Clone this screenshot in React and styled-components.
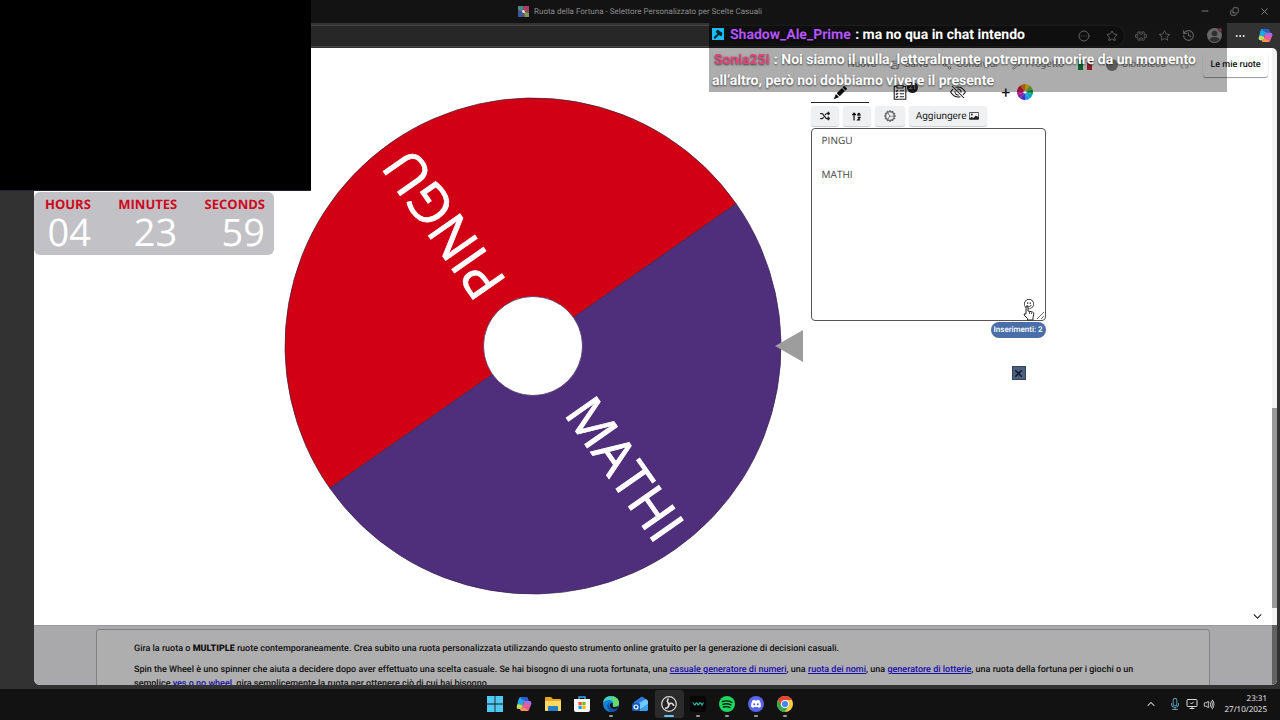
import React from "react";
import styled, { createGlobalStyle } from "styled-components";
import {
  BsPencilFill, BsEyeSlash, BsCardImage, BsEmojiSmile,
  BsPuzzle, BsStar, BsChevronDown, BsChevronUp, BsMic, BsVolumeUp, BsGearWideConnected,
} from "react-icons/bs";
import { FaShuffle } from "react-icons/fa6";
import { Star, History, CircleEllipsis, Ellipsis, Minus, X, Copy, MonitorCheck, Share2, Wrench, Save, Maximize } from "lucide-react";

const Global = createGlobalStyle`
  * { box-sizing: border-box; }
  body { margin: 0; background: #323232; font-family: Roboto, sans-serif; color: #111; text-rendering: geometricPrecision; }
  button { font: inherit; color: inherit; border: 0; padding: 0; background: none; }
  button, textarea { text-rendering: inherit; }
  svg { display: block; flex: none; }
`;

const Desktop = styled.div`
  position: relative;
  height: 100vh;
  display: flex;
  flex-direction: column;
  overflow: hidden;
`;
const TitleBar = styled.header`
  height: 23px;
  flex: none;
  padding-bottom: 1px;
  background: #131313;
  color: #8c8c8c;
  display: grid;
  grid-template-columns: 1fr auto 1fr;
  align-items: center;
`;
const WindowTitle = styled.h1`
  grid-column: 2;
  margin: 0;
  display: flex;
  align-items: center;
  gap: 5px;
  font-size: 8px;
  font-weight: 400;
`;
const WindowButtons = styled.div`
  display: flex;
  justify-content: flex-end;
  gap: 20px;
  padding-right: 10px;
`;
const AddressRow = styled.div`
  height: 25px;
  flex: none;
  display: flex;
  align-items: center;
  background: #323232;
  color: #f2f2f2;
  padding-right: 7px;
`;
const AddressPill = styled.div`
  flex: 1;
  height: 22px;
  background: #272727;
  border: 1px solid #454545;
  border-left: 0;
  border-radius: 0 11px 11px 0;
  display: flex;
  align-items: center;
  justify-content: flex-end;
  gap: 16px;
  padding-right: 6px;
`;
const BrowserTools = styled.div`
  display: flex;
  align-items: center;
  gap: 12px;
  padding-left: 10px;
`;
const Avatar = styled.span`
  width: 15px;
  height: 15px;
  border-radius: 50%;
  background: #fff;
`;
const Viewport = styled.div`
  flex: 1;
  min-height: 0;
  display: flex;
  padding: 0 3px 4px 34px;
  background: #323232;
`;
const Page = styled.div`
  flex: 1;
  min-width: 0;
  display: flex;
  flex-direction: column;
  background: #fff;
  border-radius: 0 0 0 6px;
  overflow: hidden;
`;
const ScrollTrack = styled.div`
  width: 5px;
  background: #f3f3f3;
  border-radius: 0 6px 6px 0;
  display: flex;
  flex-direction: column;
  justify-content: flex-end;
  overflow: hidden;
`;
const ScrollThumb = styled.div`
  height: 200px;
  margin-bottom: 17px;
  background: #999;
`;
const ScrollRest = styled.div`
  height: 60px;
  background: #626262;
`;
const SiteNav = styled.nav`
  height: 32px;
  flex: none;
  display: flex;
  align-items: center;
  justify-content: flex-end;
  gap: 14px;
  padding: 1px 4px 0 0;
  font-size: 10px;
`;
const NavItem = styled.button`
  display: flex;
  align-items: center;
  gap: 4px;
  opacity: 0.5;
`;
const MyWheels = styled.button`
  height: 24px;
  width: 65px;
  font-size: 9px;
  font-weight: 500;
  border-radius: 3px;
  background: #fff;
  box-shadow: 0 1px 1px #0006;
`;
const Stage = styled.main`
  flex: 1;
  min-height: 0;
  display: flex;
  justify-content: flex-start;
  padding-left: 20%;
`;
const WheelArt = styled.svg`
  width: 521px;
  height: 500px;
  margin-top: 16px;
`;
const Panel = styled.section`
  width: 235px;
  margin-left: 8px;
  display: flex;
  flex-direction: column;
`;
const Tabs = styled.div`
  display: grid;
  grid-template-columns: repeat(4, 1fr);
  height: 23px;
`;
const Tab = styled.button`
  position: relative;
  display: flex;
  align-items: center;
  justify-content: center;
  gap: 7px;
  padding: 2px 0 0 2px;
  font-size: 16px;
  border-bottom: 1px solid ${(p) => (p.$active ? "#222" : "transparent")};
`;
const Count = styled.span`
  position: absolute;
  right: 10px;
  top: 2px;
  width: 11px;
  height: 11px;
  border-radius: 50%;
  background: #222;
  color: #bbb;
  font-size: 7px;
  line-height: 11px;
`;
const Tools = styled.div`
  display: flex;
  gap: 4px;
  padding: 3px 0 2px;
`;
const Tool = styled.button`
  height: 20px;
  min-width: ${(p) => (p.$wide ? "78px" : p.$mid ? "30px" : "28px")};
  display: flex;
  align-items: center;
  justify-content: center;
  gap: 3px;
  font-size: 10px;
  color: #222;
  background: #eef0f2;
  border-radius: 3px;
  box-shadow: 0 1px 1px #0003;
`;
const EntryBox = styled.div`
  position: relative;
  display: flex;
`;
const Entries = styled.textarea`
  width: 100%;
  height: 193px;
  padding: 3px 10px;
  border: 1px solid #555;
  border-radius: 4px;
  font: 10px/17px "Open Sans", sans-serif;
  color: #444;
  resize: vertical;
  outline: 0;
`;
const Emoji = styled.button`
  position: absolute;
  right: 12px;
  bottom: 12px;
`;
const Pointer = styled.svg`
  position: absolute;
  right: 11px;
  bottom: 0;
`;
const EntryCount = styled.output`
  align-self: flex-end;
  margin-top: 1px;
  height: 16px;
  padding: 0 3px;
  border-radius: 8px;
  background: #4a6fa8;
  color: #fff;
  font-size: 8px;
  font-weight: 500;
  line-height: 16px;
`;
const CloseAd = styled.button`
  align-self: flex-end;
  margin: 28px 20px 0 0;
  width: 14px;
  height: 14px;
  display: grid;
  place-items: center;
  background: #4c607d;
  border: 1px solid #33435c;
`;
const ScrollHint = styled.button`
  align-self: flex-end;
  margin: 0 10px 4px 0;
`;
const About = styled.footer`
  flex: none;
  height: 60px;
  padding: 3px 62px 0;
  background: #a9a9ab;
  border-top: 1px solid #999;
  overflow: hidden;
`;
const AboutCard = styled.article`
  height: 80px;
  padding: 12px 47px 12px 37px;
  background: #aeaeae;
  border: 1px solid #808080;
  border-radius: 3px;
  font-size: 9px;
  font-weight: 500;
  line-height: 14px;
  p { margin: 0 0 7px; }
  b { font-weight: 900; }
  a { color: #1a0dab; }
`;
const Taskbar = styled.div`
  height: 31px;
  flex: none;
  display: grid;
  grid-template-columns: 1fr auto 1fr;
  align-items: center;
  padding-bottom: 1px;
  background: #131212;
`;
const Apps = styled.div`
  grid-column: 2;
  display: flex;
`;
const AppButton = styled.button`
  width: 29px;
  height: 28px;
  display: grid;
  place-items: center;
  position: relative;
  border-radius: 3px;
  background: ${(p) => (p.$active ? "#2b2b2b" : "none")};
  &::after {
    content: "";
    position: absolute;
    bottom: 1px;
    width: ${(p) => (p.$active ? "10px" : "4px")};
    height: 2px;
    border-radius: 1px;
    background: ${(p) => (p.$active ? "#62c3ee" : p.$running ? "#999" : "none")};
  }
`;
const Tray = styled.div`
  display: flex;
  align-items: center;
  justify-content: flex-end;
  gap: 5px;
  padding-right: 13px;
  color: #ddd;
`;
const TrayMore = styled.button`
  margin-right: 9px;
`;
const Clock = styled.time`
  font: 8px/11px "Open Sans", sans-serif;
  text-align: right;
  color: #f2f2f2;
  margin-left: 4px;
`;
const CameraOverlay = styled.div`
  position: absolute;
  left: 0;
  top: 0;
  width: 311px;
  height: 191px;
  background: #000;
  border-bottom: 1px solid #252238;
`;
const Countdown = styled.div`
  position: absolute;
  left: 34px;
  top: 192px;
  width: 240px;
  height: 63px;
  padding: 4px 9px 0 11px;
  display: flex;
  justify-content: space-between;
  background: #c2c1c5;
  border-radius: 6px;
  font-family: "Open Sans", sans-serif;
  text-align: right;
`;
const Unit = styled.div`
  font-size: 13px;
  line-height: 16px;
  font-weight: 700;
  color: #cc0a1c;
`;
const Digits = styled.div`
  font-size: 38px;
  line-height: 40px;
  font-weight: 400;
  color: #fff;
`;
const Chat = styled.div`
  position: absolute;
  left: 709px;
  top: 23px;
  width: 518px;
  font-size: 14px;
  font-weight: 700;
  line-height: 21px;
  color: #fff;
  text-shadow: 0 1px 2px #000a;
`;
const ChatLine = styled.p`
  margin: 0;
  padding: ${(p) => (p.$first ? "2px 3px" : "2px 3px 0")};
  background: ${(p) => (p.$first ? "#0009" : "#00000052")};
`;
const User = styled.span`
  color: ${(p) => p.$color};
  margin: 0 1px 0 2px;
`;
const ModBadge = styled.svg`
  && { display: inline-block; vertical-align: -1px; margin-right: 4px; }
`;

const rainbow = ["#ffd400", "#8cc63f", "#00a651", "#00a9c0", "#2790f0", "#4632c1", "#8a22a1", "#c2188b", "#e8192c", "#f58220"];

function MiniWheel({ size }) {
  return (
    <svg width={size} height={size} viewBox="-10 -10 20 20">
      {rainbow.map((c, i) => {
        const a = (i * Math.PI) / 5;
        const b = ((i + 1) * Math.PI) / 5;
        return (
          <path key={c} fill={c}
            d={`M0 0L${10 * Math.sin(a)} ${-10 * Math.cos(a)}A10 10 0 0 1 ${10 * Math.sin(b)} ${-10 * Math.cos(b)}Z`} />
        );
      })}
      <circle r="2" fill="#fff" />
    </svg>
  );
}

function Wheel() {
  return (
    <WheelArt viewBox="-251 -250 521 500" role="img" aria-label="Ruota: PINGU, MATHI">
      <g transform="rotate(-35)">
        <path d="M-248 0A248 248 0 0 1 248 0Z" fill="#d20015" stroke="#4b2038" strokeWidth="0.7" />
        <path d="M-248 0A248 248 0 0 0 248 0Z" fill="#4f2f7c" stroke="#3b2857" strokeWidth="0.7" />
      </g>
      <g fill="#fff" stroke="#fff" strokeWidth="0.8" fontFamily="'Open Sans', sans-serif" textAnchor="end">
        <text transform="rotate(55)" x="234" y="14" fontSize="52">MATHI</text>
        <text transform="rotate(-125)" x="234" y="16" fontSize="54">PINGU</text>
      </g>
      <circle r="49.500" fill="#fff" stroke="#3b2857" strokeWidth="0.7" />
      <path d="M242 0L270 -16V16Z" fill="#9d9d9d" />
    </WheelArt>
  );
}

function Checklist() {
  return (
    <svg width="14" height="16" viewBox="0 0 14 16" fill="none" stroke="#222" strokeWidth="1.1">
      <path d="M4 2.5H1.2V15.2H12.8V2.5H10M4 1.2H10V4H4ZM6.8 6.8H11M6.8 9.8H11M6.8 12.8H11M2.8 6.6L3.7 7.5L5.2 5.8M2.8 9.6L3.7 10.5L5.2 8.8M2.8 12.6L3.7 13.5L5.2 11.8" />
    </svg>
  );
}

function SortIcon() {
  return (
    <svg width="9" height="9" viewBox="0 0 11 10" fill="none" stroke="#111" strokeWidth="1.5">
      <path d="M2.500 10V1M.3 3.2L2.500 1L4.700 3.2M7.2 4.2V2.2Q8.4 .2 9.6 2.2V4.2M7.2 3.2H9.6M7 6H9.8L7 9.2H10" />
    </svg>
  );
}

function CopilotIcon({ size }) {
  return (
    <svg width={size} height={size} viewBox="0 0 16 16">
      <path d="M5 1H10Q11.500 1 12 3L12.500 5H9.500Q8 5 7.500 7L6.500 11Q6 13 4 13H3Q0 13 1 9.500L2.500 3.500Q3 1 5 1Z" fill="#20a8e8" />
      <path d="M2 8L6.800 9.500L6.500 11Q6 13 4 13H3Q0 13 1 9.500Z" fill="#c9dc4a" />
      <path d="M11 15H6Q4.500 15 4 13Q6 13 6.500 11L7.500 7Q8 5 9.500 5H13Q16 5 15 8.500L13.500 12.500Q13 15 11 15Z" fill="#ec5c92" />
      <path d="M9.500 5H13Q16 5 15 8.500L14.600 10L8 6Q8.500 5 9.500 5Z" fill="#ab69e5" />
      <path d="M4 13Q6 13 6.500 11L12.500 14.500Q12 15 11 15H6Q4.500 15 4 13Z" fill="#fa9551" />
      <path d="M5 1H10Q11.500 1 12 3L12.500 5H9.500L5 3Z" fill="#285bd5" />
    </svg>
  );
}

const appIcons = [
  { name: "Start", art: <g fill="#52c8f5"><path d="M0 0H7.600V7.600H0ZM8.400 0H16V7.600H8.400ZM0 8.400H7.600V16H0ZM8.400 8.400H16V16H8.400Z" /></g> },
  { name: "Copilot", copilot: true },
  { name: "Esplora file", art: <g><path d="M0 2Q0 1 1 1H6L8 3H15Q16 3 16 4V14Q16 15 15 15H1Q0 15 0 14Z" fill="#e9a820" /><path d="M0 5H16V14Q16 15 15 15H1Q0 15 0 14Z" fill="#ffda62" /><path d="M3 15V11Q3 10 4 10H12Q13 10 13 11V15Z" fill="#2680c8" /></g> },
  { name: "Store", art: <g><path d="M5 4V1H11V4" stroke="#38a6e8" fill="none" strokeWidth="1.500" /><path d="M0 3H16V14Q16 16 14 16H2Q0 16 0 14Z" fill="#f4f6f8" /><path d="M4.500 6H7.700V9.200H4.500Z" fill="#f25022" /><path d="M8.300 6H11.500V9.200H8.300Z" fill="#7fba00" /><path d="M4.500 9.800H7.700V13H4.500Z" fill="#00a4ef" /><path d="M8.300 9.800H11.500V13H8.300Z" fill="#ffb900" /></g> },
  { name: "Edge", running: true, art: <g><circle cx="8" cy="8" r="8" fill="#1482d4" /><path d="M0 7Q1 0 8 0Q15 .5 16 7Q16 11 11.500 11Q9 11 10 9Q11 5 7 4Q2 3.500 0 7Z" fill="#45cfc0" /><path d="M10 0.300Q16 2 16 7Q16 11 11.500 11Q9.500 10.500 10 9Q12 5 8 3Z" fill="#66d96b" /><path d="M6 6Q1.500 11 8 16Q13 16 15 12Q10 14.500 7 11Q5 8.500 6 6Z" fill="#0c4fa3" /><path d="M7 8Q6 12 11 13Q13 13 15 12Q16 10 14 10.500Q8 12 10 8Q9 6 7 8Z" fill="#131212" /></g> },
  { name: "Outlook", art: <g><path d="M2 6L9 1Q10 .5 11 1L16 5V13Q16 15 14 15H4Q2 15 2 13Z" fill="#2a77dd" /><path d="M2 10L14 3L16 5V8L6 15H4Q2 15 2 13Z" fill="#70c8fa" /><path d="M7 15L16 8V13Q16 15 14 15Z" fill="#3aa3ef" /><rect y="7" width="8" height="8" rx="1.500" fill="#1459b5" /><circle cx="4" cy="11" r="2" fill="none" stroke="#fff" strokeWidth="1.200" /></g> },
  { name: "OBS", active: true, art: <g><circle cx="8" cy="8" r="7.300" fill="#252327" stroke="#ddd" strokeWidth="1.200" /><path d="M7.500 2.500Q5 5.500 8 7.800M12.800 10Q11.800 6 8.200 7.800M4 12.300Q8 12 8 8" fill="none" stroke="#ddd" strokeWidth="1.600" /><circle cx="8" cy="8" r="1.300" fill="#ddd" /></g> },
  { name: "Wave Link", running: true, art: <g><rect width="16" height="16" rx="3" fill="#050606" /><path d="M2.500 6.500Q3.500 6.500 4.500 9Q5.500 9 6 7Q7 6.500 8 9Q9 9 9.500 7Q11 6.500 12 9L13.500 6.500" fill="none" stroke="#31bfa8" strokeWidth="1.100" /></g> },
  { name: "Spotify", running: true, art: <g><circle cx="8" cy="8" r="8" fill="#1ed760" /><path d="M3.500 5.500Q8.500 4 12.800 6.300M4 8.300Q8.300 7 12 9M4.500 11Q8.200 10 11 11.600" fill="none" stroke="#10180f" strokeWidth="1.400" strokeLinecap="round" /></g> },
  { name: "Discord", running: true, art: <g><circle cx="8" cy="8" r="8" fill="#5865f2" /><path d="M4.500 4.500Q6 3.700 6.600 3.800L7 4.500H9L9.400 3.800Q10 3.700 11.500 4.500Q13.200 7 13 10.500Q11.500 11.800 10.500 11.800L9.900 10.900H6.100L5.500 11.800Q4.500 11.800 3 10.500Q2.800 7 4.500 4.500Z" fill="#fff" /><circle cx="6.200" cy="8.300" r="1.100" fill="#5865f2" /><circle cx="9.800" cy="8.300" r="1.100" fill="#5865f2" /></g> },
  { name: "Chrome", running: true, art: <g><circle cx="8" cy="8" r="8" fill="#ffcd40" /><path d="M1.070 4A8 8 0 0 1 14.930 4H8L4.540 10Z" fill="#ea4335" /><path d="M1.070 4A8 8 0 0 0 8 16L11.460 10L4.540 10Z" fill="#34a853" /><circle cx="8" cy="8" r="4" fill="#fff" /><circle cx="8" cy="8" r="3.100" fill="#4285f4" /></g> },
];

const units = [["HOURS", "04"], ["MINUTES", "23"], ["SECONDS", "59"]];

export default function App() {
  return (
    <>
      <Global />
      <Desktop>
        <TitleBar>
          <WindowTitle>
            <svg width="11" height="11" viewBox="0 0 11 11">
              <path d="M0 0H11V11H0Z" fill="#7a3f78" /><path d="M0 0H5L5.500 5.500L0 4Z" fill="#3f8f85" />
              <path d="M6 0H11V5L5.500 5.500Z" fill="#b23b64" /><path d="M0 6L5.500 5.500L4 11H0Z" fill="#315ba0" />
              <path d="M11 7V11H7L5.500 5.500Z" fill="#7c9b46" /><circle cx="5.500" cy="5.500" r="1.500" fill="#ddd" />
            </svg>
            Ruota della Fortuna - Selettore Personalizzato per Scelte Casuali
          </WindowTitle>
          <WindowButtons>
            <button aria-label="Riduci"><Minus size={10} strokeWidth={2} /></button>
            <button aria-label="Ripristina"><Copy size={9} strokeWidth={2} transform="rotate(-90)" /></button>
            <button aria-label="Chiudi"><X size={11} strokeWidth={2} /></button>
          </WindowButtons>
        </TitleBar>
        <AddressRow>
          <AddressPill>
            <CircleEllipsis size={12} strokeWidth={2} />
            <Star size={12} strokeWidth={2} />
          </AddressPill>
          <BrowserTools>
            <BsPuzzle size={12} />
            <BsStar size={11} />
            <History size={13} strokeWidth={2} />
            <Avatar>
              <svg width="15" height="15" viewBox="0 0 15 15"><circle cx="7.500" cy="5.500" r="2.800" fill="#777" /><path d="M2.500 12Q3 9 7.500 9Q12 9 12.500 12Q7.500 16 2.500 12Z" fill="#777" /><circle cx="13" cy="2" r="2" fill="#ff8fa1" /></svg>
            </Avatar>
            <Ellipsis size={12} color="#fff" />
            <CopilotIcon size={15} />
          </BrowserTools>
        </AddressRow>
        <Viewport>
          <Page>
            <SiteNav>
              <NavItem>Nuovo</NavItem>
              <NavItem><Save size={10} />Salva</NavItem>
              <NavItem><Share2 size={10} />Condividi</NavItem>
              <NavItem><Wrench size={10} />Progetto</NavItem>
              <svg width="14" height="10" viewBox="0 0 14 10"><path d="M0 0H5V10H0Z" fill="#009246" /><path d="M5 0H9V10H5Z" fill="#fff" /><path d="M9 0H14V10H9Z" fill="#ce2b37" /></svg>
              <NavItem><svg width="12" height="12" viewBox="0 0 12 12"><circle cx="6" cy="6" r="6" fill="#111" /></svg>Biblioteca</NavItem>
              <NavItem aria-label="Schermo intero"><Maximize size={9} /></NavItem>
              <MyWheels>Le mie ruote</MyWheels>
            </SiteNav>
            <Stage>
              <Wheel />
              <Panel>
                <Tabs>
                  <Tab $active aria-label="Modifica"><BsPencilFill size={13} /></Tab>
                  <Tab aria-label="Risultati"><Checklist /><Count>21</Count></Tab>
                  <Tab aria-label="Nascondi"><BsEyeSlash size={16} /></Tab>
                  <Tab aria-label="Aggiungi ruota">+<MiniWheel size={16} /></Tab>
                </Tabs>
                <Tools>
                  <Tool aria-label="Mescola"><FaShuffle size={10} /></Tool>
                  <Tool aria-label="Ordina"><SortIcon /></Tool>
                  <Tool $mid aria-label="Impostazioni"><BsGearWideConnected size={12} color="#666" /></Tool>
                  <Tool $wide>Aggiungere <BsCardImage size={10} /></Tool>
                </Tools>
                <EntryBox>
                  <Entries aria-label="Voci" spellCheck={false} defaultValue={"PINGU\n\nMATHI"} />
                  <Emoji aria-label="Emoji"><BsEmojiSmile size={10} /></Emoji>
                  <Pointer width="12" height="16" viewBox="0 0 12 16">
                    <path d="M3 9V2Q4 .5 5 2V6L9.500 7Q11 7.500 10.800 9L10 12.500V15H4.500V13.500L1 10Q1 8 3 9Z" fill="#fff" stroke="#222" />
                    <path d="M6.500 7V9M8.500 7.500V9" stroke="#222" strokeWidth="0.800" />
                  </Pointer>
                </EntryBox>
                <EntryCount>Inserimenti: 2</EntryCount>
                <CloseAd aria-label="Chiudi annuncio"><X size={11} strokeWidth={3} color="#0a1222" /></CloseAd>
              </Panel>
            </Stage>
            <ScrollHint aria-label="Scorri"><BsChevronDown size={9} strokeWidth={1} /></ScrollHint>
            <About>
              <AboutCard>
                <p>Gira la ruota o <b>MULTIPLE</b> ruote contemporaneamente. Crea subito una ruota personalizzata utilizzando questo strumento online gratuito per la generazione di decisioni casuali.</p>
                <p>Spin the Wheel è uno spinner che aiuta a decidere dopo aver effettuato una scelta casuale. Se hai bisogno di una ruota fortunata, una <a href="#numeri">casuale generatore di numeri</a>, una <a href="#nomi">ruota dei nomi</a>, una <a href="#lotterie">generatore di lotterie</a>, una ruota della fortuna per i giochi o un semplice <a href="#yesno">yes o no wheel</a>, gira semplicemente la ruota per ottenere ciò di cui hai bisogno.</p>
              </AboutCard>
            </About>
          </Page>
          <ScrollTrack><ScrollThumb /><ScrollRest /></ScrollTrack>
        </Viewport>
        <Taskbar>
          <Apps>
            {appIcons.map((a) => (
              <AppButton key={a.name} aria-label={a.name} $active={a.active} $running={a.running}>
                {a.copilot ? <CopilotIcon size={16} /> : <svg width="16" height="16" viewBox="0 0 16 16">{a.art}</svg>}
              </AppButton>
            ))}
          </Apps>
          <Tray>
            <TrayMore aria-label="Icone nascoste"><BsChevronUp size={8} strokeWidth={1} /></TrayMore>
            <BsMic size={12} color="#69bfe0" />
            <MonitorCheck size={12} strokeWidth={2} />
            <BsVolumeUp size={13} />
            <Clock>23:31<br />27/10/2025</Clock>
          </Tray>
        </Taskbar>
        <CameraOverlay />
        <Countdown>
          {units.map(([u, n]) => (
            <Unit key={u}>{u}<Digits>{n}</Digits></Unit>
          ))}
        </Countdown>
        <Chat>
          <ChatLine $first>
            <ModBadge width="12" height="12" viewBox="0 0 12 12"><path d="M0 0H12V12H0Z" fill="#18c0f5" /><path d="M5.500 1.500L10.500 5L9.500 8.500L7 7L3 11L1.500 9.500L5.500 5.500L3.500 4Z" fill="#05252f" /></ModBadge>
            <User $color="#b554ff">Shadow_Ale_Prime</User> : ma no qua in chat intendo
          </ChatLine>
          <ChatLine>
            <User $color="#e0457b">Sonia25i</User> : Noi siamo il nulla, letteralmente potremmo morire da un momento all’altro, però noi dobbiamo vivere il presente
          </ChatLine>
        </Chat>
      </Desktop>
    </>
  );
}
